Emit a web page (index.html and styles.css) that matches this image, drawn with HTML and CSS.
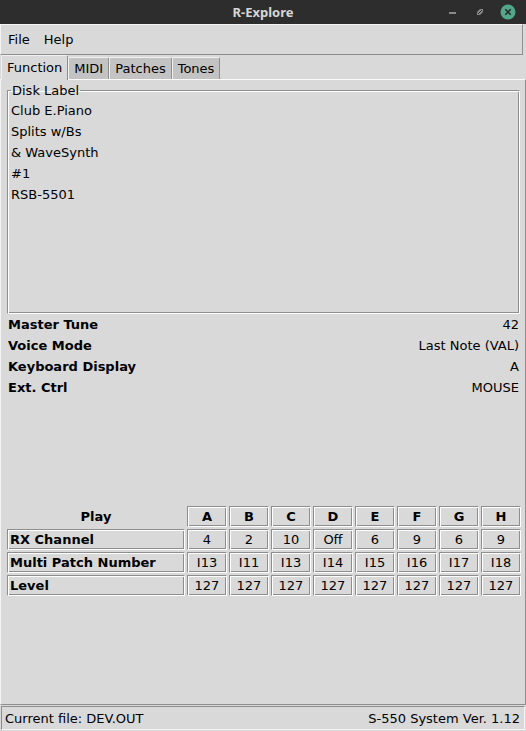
FILE: index.html
```html
<!DOCTYPE html>
<html>
<head>
<meta charset="utf-8">
<link rel="stylesheet" href="styles.css">
</head>
<body>
<div class="window">
  <div class="titlebar">
    <span class="title">R-Explore</span>
    <div class="controls">
      <svg class="ctl" width="14" height="14" viewBox="0 0 14 14"><rect x="3" y="7" width="7" height="2" fill="#8a8a8a"/></svg>
      <svg class="ctl" width="14" height="14" viewBox="0 0 14 14"><path d="M4 7 L7 4 L10 4 L10 7 L7 10 L4 10 Z" fill="#8a8a8a"/><path d="M5 9 L9 5" stroke="#2d2d2d" stroke-width="1"/></svg>
      <svg class="ctl close" width="16" height="16" viewBox="0 0 16 16"><circle cx="8" cy="8" r="7.5" fill="#52a689"/><path d="M5.3 5.3 L10.7 10.7 M10.7 5.3 L5.3 10.7" stroke="#2a2a2a" stroke-width="1.6"/></svg>
    </div>
  </div>
  <div class="menubar">
    <span class="menu">File</span>
    <span class="menu">Help</span>
  </div>
  <div class="tabs">
    <div class="tab selected">Function</div>
    <div class="tab">MIDI</div>
    <div class="tab">Patches</div>
    <div class="tab">Tones</div>
  </div>
  <div class="pane">
    <fieldset class="disk">
      <legend>Disk Label</legend>
      <div class="disktext">
        <div>Club E.Piano</div>
        <div>Splits w/Bs</div>
        <div>&amp; WaveSynth</div>
        <div>#1</div>
        <div>RSB-5501</div>
      </div>
    </fieldset>
    <div class="params">
      <div class="prow"><span class="pl">Master Tune</span><span>42</span></div>
      <div class="prow"><span class="pl">Voice Mode</span><span>Last Note (VAL)</span></div>
      <div class="prow"><span class="pl">Keyboard Display</span><span>A</span></div>
      <div class="prow"><span class="pl">Ext. Ctrl</span><span>MOUSE</span></div>
    </div>
    <div class="grid">
      <div class="c head plain">Play</div>
      <div class="c head">A</div><div class="c head">B</div><div class="c head">C</div><div class="c head">D</div>
      <div class="c head">E</div><div class="c head">F</div><div class="c head">G</div><div class="c head">H</div>

      <div class="c lab">RX Channel</div>
      <div class="c">4</div><div class="c">2</div><div class="c">10</div><div class="c">Off</div>
      <div class="c">6</div><div class="c">9</div><div class="c">6</div><div class="c">9</div>

      <div class="c lab">Multi Patch Number</div>
      <div class="c">I13</div><div class="c">I11</div><div class="c">I13</div><div class="c">I14</div>
      <div class="c">I15</div><div class="c">I16</div><div class="c">I17</div><div class="c">I18</div>

      <div class="c lab">Level</div>
      <div class="c">127</div><div class="c">127</div><div class="c">127</div><div class="c">127</div>
      <div class="c">127</div><div class="c">127</div><div class="c">127</div><div class="c">127</div>
    </div>
  </div>
  <div class="status">
    <span>Current file: DEV.OUT</span>
    <span>S-550 System Ver. 1.12</span>
  </div>
</div>
</body>
</html>
```
FILE: styles.css
```css
html, body {
  margin: 0;
  padding: 0;
}
body {
  width: 526px;
  height: 731px;
  overflow: hidden;
  background: #d9d9d9;
  font-family: "DejaVu Sans", sans-serif;
  font-size: 13px;
  color: #000;
}
.window {
  display: flex;
  flex-direction: column;
  width: 526px;
  height: 731px;
}
.titlebar {
  height: 24px;
  flex: none;
  background: #2d2d2d;
  position: relative;
  display: flex;
  align-items: center;
  justify-content: center;
}
.title {
  font-family: "Noto Sans", sans-serif;
  font-weight: bold;
  font-size: 13px;
  color: #d6d6d6;
  line-height: 24px;
}
.controls {
  position: absolute;
  right: 10px;
  top: 4px;
  display: flex;
  align-items: center;
  gap: 13px;
}
.ctl {
  display: block;
}
.menubar {
  height: 31px;
  flex: none;
  box-sizing: border-box;
  border-top: 1px solid #f4f4f4;
  border-left: 1px solid #f4f4f4;
  border-bottom: 1px solid #8e8e8e;
  border-right: 1px solid #8e8e8e;
  margin-right: 3px;
  display: flex;
  align-items: center;
  padding-left: 7px;
  gap: 14px;
}
.menu {
  line-height: 16px;
}
.tabs {
  height: 24px;
  flex: none;
  display: flex;
  align-items: flex-end;
  padding-left: 1px;
  position: relative;
  z-index: 2;
}
.tab {
  box-sizing: border-box;
  height: 22px;
  padding: 0 5px;
  line-height: 21px;
  background: #c3c3c3;
  border-top: 1px solid #f0f0f0;
  border-left: 1px solid #f0f0f0;
  border-right: 1px solid #8e8e8e;
  border-radius: 2px 2px 0 0;
}
.tab.selected {
  height: 25px;
  margin-bottom: -1px;
  background: #d9d9d9;
  line-height: 23px;
}
.pane {
  flex: 1;
  box-sizing: border-box;
  border-top: 1px solid #fbfbfb;
  border-left: 1px solid #f4f4f4;
  border-right: 1px solid #8e8e8e;
  border-bottom: 1px solid #8e8e8e;
  display: flex;
  flex-direction: column;
}
.disk {
  margin: 3px 5px 0 6px;
  padding: 0;
  border-top: 1px solid #8e8e8e;
  border-left: 1px solid #8e8e8e;
  border-bottom: 1px solid #fff;
  border-right: 1px solid #fff;
  box-shadow: inset 1px 1px 0 #fff, inset -1px -1px 0 #8e8e8e;
  min-width: 0;
}
.disk legend {
  margin-left: 3px;
  padding: 0 1px;
  line-height: 15px;
}
.disktext {
  height: 215px;
  box-sizing: border-box;
  padding: 2px 0 0 3px;
  line-height: 21px;
}
.params {
  margin: 0 6px 0 7px;
  line-height: 21px;
}
.prow {
  display: flex;
  justify-content: space-between;
}
.pl {
  font-weight: bold;
}
.grid {
  margin: 108px 0 0 6px;
  display: grid;
  grid-template-columns: 178px repeat(8, 40px);
  grid-auto-rows: 21px;
  column-gap: 2px;
  row-gap: 2px;
}
.c {
  box-sizing: border-box;
  border-top: 1px solid #8e8e8e;
  border-left: 1px solid #8e8e8e;
  border-bottom: 1px solid #fff;
  border-right: 1px solid #fff;
  box-shadow: inset 1px 1px 0 #fff, inset -1px -1px 0 #8e8e8e;
  text-align: center;
  line-height: 19px;
}
.c.head {
  font-weight: bold;
}
.c.plain {
  border-color: transparent;
  box-shadow: none;
}
.c.lab {
  font-weight: bold;
  text-align: left;
  padding-left: 2px;
}
.status {
  height: 24px;
  flex: none;
  margin: 1px 1px 1px 1px;
  box-sizing: border-box;
  border-top: 1px solid #8e8e8e;
  border-left: 1px solid #8e8e8e;
  border-bottom: 1px solid #f4f4f4;
  border-right: 1px solid #f4f4f4;
  display: flex;
  justify-content: space-between;
  align-items: center;
  padding: 0 4px 0 3px;
}
```
